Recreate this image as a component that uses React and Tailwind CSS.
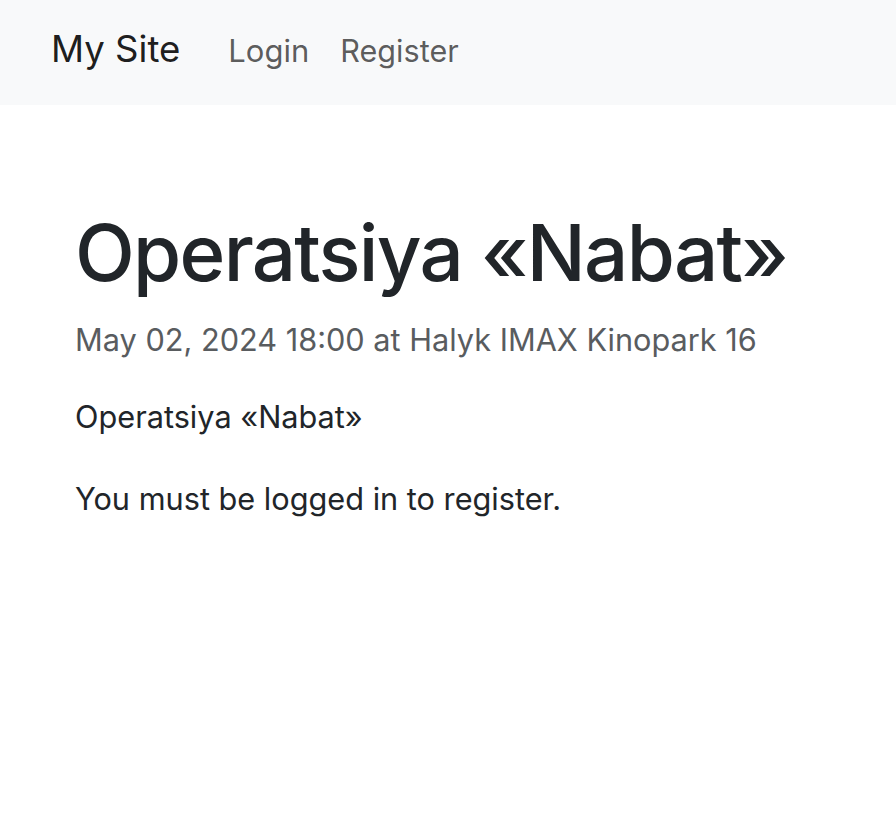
import React from "react";

const App = () => {
  return (
    <div className="min-h-[840px] bg-white font-['Inter',sans-serif] text-[#212529]">
      <nav className="flex h-[105px] items-center bg-[#f8f9fa] pb-[7px] pl-[51px]">
        <div className="flex items-baseline">
          <a href="#" className="text-[36.6px] leading-[54px] text-black/90">
            My Site
          </a>
          <a href="#" className="ml-[48px] text-[31px] leading-[46px] text-black/65">
            Login
          </a>
          <a href="#" className="ml-[31px] text-[30.6px] leading-[46px] text-black/65">
            Register
          </a>
        </div>
      </nav>

      <main className="px-[75px] pt-[100px]">
        <h1 className="whitespace-nowrap text-[78px] font-medium leading-[96px] tracking-[-0.022em]">
          Operatsiya «Nabat»
        </h1>
        <p className="mt-[16px] text-[30.7px] leading-[46px] text-[#595c5f]">
          May 02, 2024 18:00 at Halyk IMAX Kinopark 16
        </p>
        <p className="mt-[31px] text-[30.7px] leading-[46px]">Operatsiya «Nabat»</p>
        <p className="mt-[36px] text-[30.7px] leading-[46px]">
          You must be logged in to register.
        </p>
      </main>
    </div>
  );
};

export default App;
